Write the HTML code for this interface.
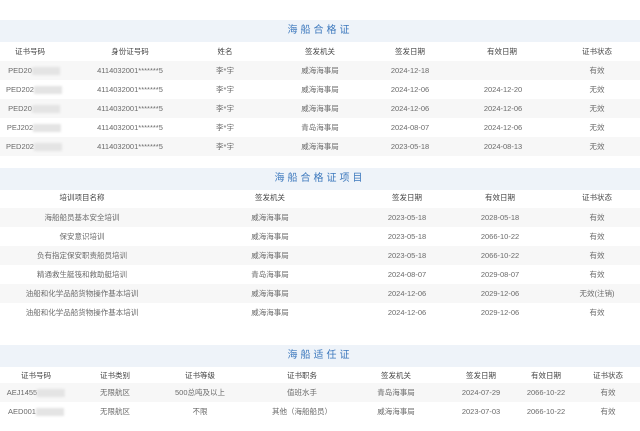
<!DOCTYPE html>
<html><head><meta charset="utf-8"><style>
*{margin:0;padding:0;box-sizing:border-box}
body{width:640px;height:431px;background:#fff;position:relative;overflow:hidden;font-family:"Liberation Sans","Noto Sans CJK SC",sans-serif;font-size:7.5px;color:#6a6a6a}
.t{position:absolute;left:0;width:640px;height:22px;background:#eef3f9;color:#3c78bd;font-size:10px;letter-spacing:3px;text-align:center;line-height:22px}
.r{position:absolute;left:0;width:640px;height:19px}
.g{background:#f7f7f7}
.r span{position:absolute;top:0;line-height:19px;transform:translateX(-50%);white-space:nowrap}
.h span{color:#444}
.b{display:inline-block;width:28px;height:8px;background:#e4e4e4;vertical-align:middle;filter:blur(1px)}
</style></head><body>
<div class="t" style="top:20px">海船合格证</div>
<div class="r h" style="top:42px"><span style="left:30px">证书号码</span><span style="left:130px">身份证号码</span><span style="left:225px">姓名</span><span style="left:320px">签发机关</span><span style="left:410px">签发日期</span><span style="left:502px">有效日期</span><span style="left:597px">证书状态</span></div>
<div class="r g" style="top:61px"><span style="left:34px">PED20<i class="b"></i></span><span style="left:130px">4114032001*******5</span><span style="left:225px">李*宇</span><span style="left:320px">威海海事局</span><span style="left:410px">2024-12-18</span><span style="left:597px">有效</span></div>
<div class="r" style="top:80px"><span style="left:34px">PED202<i class="b"></i></span><span style="left:130px">4114032001*******5</span><span style="left:225px">李*宇</span><span style="left:320px">威海海事局</span><span style="left:410px">2024-12-06</span><span style="left:503px">2024-12-20</span><span style="left:597px">无效</span></div>
<div class="r g" style="top:99px"><span style="left:34px">PED20<i class="b"></i></span><span style="left:130px">4114032001*******5</span><span style="left:225px">李*宇</span><span style="left:320px">威海海事局</span><span style="left:410px">2024-12-06</span><span style="left:503px">2024-12-06</span><span style="left:597px">无效</span></div>
<div class="r" style="top:118px"><span style="left:34px">PEJ202<i class="b"></i></span><span style="left:130px">4114032001*******5</span><span style="left:225px">李*宇</span><span style="left:320px">青岛海事局</span><span style="left:410px">2024-08-07</span><span style="left:503px">2024-12-06</span><span style="left:597px">无效</span></div>
<div class="r g" style="top:137px"><span style="left:34px">PED202<i class="b"></i></span><span style="left:130px">4114032001*******5</span><span style="left:225px">李*宇</span><span style="left:320px">威海海事局</span><span style="left:410px">2023-05-18</span><span style="left:503px">2024-08-13</span><span style="left:597px">无效</span></div>

<div class="t" style="top:168px">海船合格证项目</div>
<div class="r h" style="top:188px"><span style="left:82px">培训项目名称</span><span style="left:270px">签发机关</span><span style="left:407px">签发日期</span><span style="left:500px">有效日期</span><span style="left:597px">证书状态</span></div>
<div class="r g" style="top:208px"><span style="left:82px">海船船员基本安全培训</span><span style="left:270px">威海海事局</span><span style="left:407px">2023-05-18</span><span style="left:500px">2028-05-18</span><span style="left:597px">有效</span></div>
<div class="r" style="top:227px"><span style="left:82px">保安意识培训</span><span style="left:270px">威海海事局</span><span style="left:407px">2023-05-18</span><span style="left:500px">2066-10-22</span><span style="left:597px">有效</span></div>
<div class="r g" style="top:246px"><span style="left:82px">负有指定保安职责船员培训</span><span style="left:270px">威海海事局</span><span style="left:407px">2023-05-18</span><span style="left:500px">2066-10-22</span><span style="left:597px">有效</span></div>
<div class="r" style="top:265px"><span style="left:82px">精通救生艇筏和救助艇培训</span><span style="left:270px">青岛海事局</span><span style="left:407px">2024-08-07</span><span style="left:500px">2029-08-07</span><span style="left:597px">有效</span></div>
<div class="r g" style="top:284px"><span style="left:82px">油船和化学品船货物操作基本培训</span><span style="left:270px">威海海事局</span><span style="left:407px">2024-12-06</span><span style="left:500px">2029-12-06</span><span style="left:597px">无效(注销)</span></div>
<div class="r" style="top:303px"><span style="left:82px">油船和化学品船货物操作基本培训</span><span style="left:270px">威海海事局</span><span style="left:407px">2024-12-06</span><span style="left:500px">2029-12-06</span><span style="left:597px">有效</span></div>

<div class="t" style="top:345px">海船适任证</div>
<div class="r h" style="top:367px;height:16px"><span style="left:36px;line-height:18px">证书号码</span><span style="left:115px;line-height:18px">证书类别</span><span style="left:200px;line-height:18px">证书等级</span><span style="left:302px;line-height:18px">证书职务</span><span style="left:396px;line-height:18px">签发机关</span><span style="left:481px;line-height:18px">签发日期</span><span style="left:546px;line-height:18px">有效日期</span><span style="left:608px;line-height:18px">证书状态</span></div>
<div class="r g" style="top:383px"><span style="left:36px">AEJ1455<i class="b"></i></span><span style="left:115px">无限航区</span><span style="left:200px">500总吨及以上</span><span style="left:302px">值班水手</span><span style="left:396px">青岛海事局</span><span style="left:481px">2024-07-29</span><span style="left:546px">2066-10-22</span><span style="left:608px">有效</span></div>
<div class="r" style="top:402px"><span style="left:36px">AED001<i class="b"></i></span><span style="left:115px">无限航区</span><span style="left:200px">不限</span><span style="left:302px">其他（海船船员）</span><span style="left:396px">威海海事局</span><span style="left:481px">2023-07-03</span><span style="left:546px">2066-10-22</span><span style="left:608px">有效</span></div>
</body></html>
